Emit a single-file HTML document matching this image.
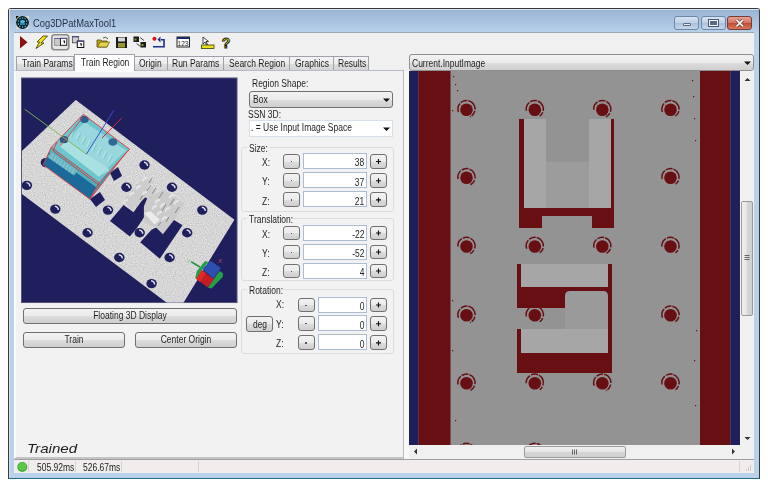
<!DOCTYPE html><html><head><meta charset="utf-8"><style>
html,body{margin:0;padding:0;width:768px;height:485px;overflow:hidden;background:#fff;}
.t{position:absolute;white-space:nowrap;font-family:"Liberation Sans",sans-serif;transform-origin:0 0;}
.r{position:absolute;box-sizing:border-box;}
svg{position:absolute;left:0;top:0;}
</style></head><body>
<div class="r" style="left:8px;top:8px;width:752px;height:471px;background:linear-gradient(#98b4d3 0px,#a9c3df 12px,#b9d1ea 24px,#b9d1ea 100%);border:1px solid #3a3a3a;border-radius:3px 3px 0 0;border-bottom-color:#1f6f80;"></div>
<div class="r" style="left:9px;top:9px;width:750px;height:1px;background:#d6e4f3;border-radius:2px 2px 0 0;"></div>
<div class="r" style="left:9px;top:9px;width:1px;height:469px;background:#d0e0f0;"></div>
<div class="r" style="left:14px;top:32px;width:740px;height:441px;background:#f0f0f0;border-top:1px solid #9aa6b4;"></div>
<svg width="768" height="485" style="left:0;top:0"><rect x="16" y="16" width="13" height="13" fill="#d6d8d4"/><path d="M16 16h3l-3 3z" fill="#111"/><circle cx="22.5" cy="22.5" r="6.4" fill="#0c1a22"/><ellipse cx="22.5" cy="21.5" rx="2.6" ry="1.6" fill="#3ec4e6"/><rect x="20" y="23.2" width="5" height="1.6" fill="#2aa8cc"/><path d="M19.5 18.5h1.2M22 18h1.2M24.5 18.5h1.2M17.8 21h1.2M26 21h1.2M17.8 24h1.2M26 24h1.2M19 26.5h1.4M22 27h1.2M24.5 26.5h1.4" stroke="#38b8dc" stroke-width="1.3"/></svg>
<div class="t" style="left:32.50px;top:17.69px;font-size:11px;line-height:11px;transform:scaleX(0.85);color:#25324a;">Cog3DPatMaxTool1</div>
<div class="r" style="left:674px;top:16px;width:25px;height:14px;border:1px solid #6f87a6;border-radius:3px;background:linear-gradient(#d7e3f1,#bcd0e8 50%,#a9c0dc 51%,#c4d7ec);"></div>
<div class="r" style="left:682.5px;top:22.5px;width:8.5px;height:3.5px;background:#e8ecf0;border:1px solid #5a6880;border-radius:1px;"></div>
<div class="r" style="left:701px;top:16px;width:25px;height:14px;border:1px solid #6f87a6;border-radius:3px;background:linear-gradient(#d7e3f1,#bcd0e8 50%,#a9c0dc 51%,#c4d7ec);"></div>
<div class="r" style="left:709px;top:20px;width:9px;height:6px;border:1.5px solid #f2f5f8;outline:1px solid #4a5870;background:#5a6880;"></div>
<div class="r" style="left:727px;top:16px;width:25px;height:14px;border:1px solid #7a3a36;border-radius:3px;background:linear-gradient(#e8a196,#d5705f 50%,#c24a33 51%,#d77a5e);"></div>
<svg width="768" height="485"><path d="M736.5 19.8l6.5 6.5M743 19.8l-6.5 6.5" stroke="#6a3a34" stroke-width="3.2"/><path d="M736.5 19.8l6.5 6.5M743 19.8l-6.5 6.5" stroke="#f4eeee" stroke-width="1.9"/></svg>
<svg width="768" height="485"><path d="M20 36 L27.5 42.2 L20 48.5 Z" fill="#8a1010"/><path d="M43 36 L47.5 36 L41 43 L44 43 L36 48.5 L39.5 42 L37 42 Z" fill="#f1e21a" stroke="#3a3300" stroke-width="0.8"/><rect x="51.8" y="34.8" width="17" height="15" rx="2.8" fill="#e6e6e6" stroke="#8a8a8a" stroke-width="1.6"/><rect x="54.5" y="38.3" width="6" height="7" fill="#c8c8c8" stroke="#777" stroke-width="0.6"/><rect x="54.5" y="38" width="6" height="1" fill="#5a5aa0"/><rect x="60.5" y="38.3" width="6.3" height="7" fill="#fff" stroke="#111" stroke-width="0.9"/><rect x="60.5" y="38" width="6.3" height="1" fill="#5a5aa0"/><path d="M63.2 40.5h1.8v3l-1 -0.8z" fill="#111"/><rect x="72.3" y="36.5" width="6.4" height="6.3" fill="#cfcfcf" stroke="#333" stroke-width="0.7"/><rect x="72.3" y="36.2" width="6.4" height="1.2" fill="#4a4a90"/><rect x="77.3" y="41" width="6.5" height="6.5" fill="#fff" stroke="#111" stroke-width="1"/><rect x="77.3" y="40.7" width="6.5" height="1.2" fill="#4a4a90"/><path d="M80 43.2h1.8v3l-1 -0.8z" fill="#111"/><path d="M97 40 h4 l1 1 h5 v6 h-10 z" fill="#b9a52c" stroke="#5a4d00" stroke-width="0.8"/><path d="M97.5 47 l2.5 -5 h9.5 l-2.5 5 z" fill="#e6d24a" stroke="#5a4d00" stroke-width="0.7"/><path d="M103 38 q3 -2 5 1" stroke="#3a6a20" stroke-width="1" fill="none"/><rect x="116" y="37" width="11" height="11" fill="#1b1b1b"/><rect x="118" y="37.5" width="7" height="4" fill="#d8d8d8"/><rect x="118" y="43" width="7" height="4.5" fill="#9a9a30"/><rect x="133.5" y="36.5" width="5.5" height="5.5" fill="#1a1a1a"/><rect x="134.5" y="38.5" width="2" height="2" fill="#8a9030"/><rect x="140.5" y="42" width="5.5" height="5.5" fill="#1a1a1a"/><rect x="141.5" y="44" width="2" height="2" fill="#8a9030"/><path d="M140 37.5l4 3M140.5 46.5l-4 -3" stroke="#333" stroke-width="0.9"/><circle cx="154.5" cy="38.8" r="2" fill="#e01010"/><path d="M153 46.8 h11 v-7 h-3" stroke="#1a2f8a" stroke-width="1.6" fill="none"/><path d="M160.5 36.5 l-3 3 l3 3 z" fill="#1a2f8a"/><rect x="177" y="37" width="12.5" height="10" fill="#fff" stroke="#222" stroke-width="1"/><rect x="177" y="37" width="12.5" height="2" fill="#1a2a6a"/><text x="177.6" y="46" font-family="Liberation Sans" font-size="6.5" fill="#222">123</text><path d="M203 37 v7 l2 -2 l1.5 3 l1 -0.5 l-1.5 -3 h2.5 z" fill="#fff" stroke="#111" stroke-width="0.8"/><rect x="201.5" y="45" width="12.5" height="3.5" fill="#e8e020" stroke="#3a3a00" stroke-width="0.8"/><text x="221.8" y="47.8" font-family="Liberation Sans" font-weight="bold" font-size="14" fill="#e0d020" stroke="#1a1a1a" stroke-width="0.9">?</text></svg>
<div class="r" style="left:16px;top:56px;width:58px;height:14px;background:linear-gradient(#f4f4f4,#ececec 50%,#dedede 51%,#d4d4d4);border:1px solid #9ea3ab;border-bottom:none;"></div>
<div class="t" style="left:21.50px;top:59.33px;font-size:10px;line-height:10px;transform:scaleX(0.85);color:#1e1e1e;">Train Params</div>
<div class="r" style="left:134px;top:56px;width:34px;height:14px;background:linear-gradient(#f4f4f4,#ececec 50%,#dedede 51%,#d4d4d4);border:1px solid #9ea3ab;border-bottom:none;"></div>
<div class="t" style="left:138.50px;top:59.33px;font-size:10px;line-height:10px;transform:scaleX(0.85);color:#1e1e1e;">Origin</div>
<div class="r" style="left:167px;top:56px;width:57px;height:14px;background:linear-gradient(#f4f4f4,#ececec 50%,#dedede 51%,#d4d4d4);border:1px solid #9ea3ab;border-bottom:none;"></div>
<div class="t" style="left:172.00px;top:59.33px;font-size:10px;line-height:10px;transform:scaleX(0.85);color:#1e1e1e;">Run Params</div>
<div class="r" style="left:223px;top:56px;width:67px;height:14px;background:linear-gradient(#f4f4f4,#ececec 50%,#dedede 51%,#d4d4d4);border:1px solid #9ea3ab;border-bottom:none;"></div>
<div class="t" style="left:228.50px;top:59.33px;font-size:10px;line-height:10px;transform:scaleX(0.85);color:#1e1e1e;">Search Region</div>
<div class="r" style="left:289px;top:56px;width:45px;height:14px;background:linear-gradient(#f4f4f4,#ececec 50%,#dedede 51%,#d4d4d4);border:1px solid #9ea3ab;border-bottom:none;"></div>
<div class="t" style="left:294.50px;top:59.33px;font-size:10px;line-height:10px;transform:scaleX(0.85);color:#1e1e1e;">Graphics</div>
<div class="r" style="left:333px;top:56px;width:36px;height:14px;background:linear-gradient(#f4f4f4,#ececec 50%,#dedede 51%,#d4d4d4);border:1px solid #9ea3ab;border-bottom:none;"></div>
<div class="t" style="left:338.00px;top:59.33px;font-size:10px;line-height:10px;transform:scaleX(0.85);color:#1e1e1e;">Results</div>
<div class="r" style="left:14px;top:70px;width:390px;height:389px;background:#f2f2f2;border:1px solid #b6bcc4;border-left:2px solid #fbfbfb;border-bottom:2px solid #c4c4c4;"></div>
<div class="r" style="left:404px;top:71px;width:5px;height:388px;background:#f8f8f8;"></div>
<div class="r" style="left:74px;top:54px;width:61px;height:17px;background:#fff;border:1px solid #9ea3ab;border-bottom:none;"></div>
<div class="t" style="left:80.50px;top:57.73px;font-size:10px;line-height:10px;transform:scaleX(0.85);color:#1e1e1e;">Train Region</div>
<div class="r" style="left:75px;top:69px;width:59px;height:3px;background:#fff;"></div>
<svg width="768" height="485"><defs><clipPath id="c3"><rect x="22" y="78.5" width="214.5" height="224"/></clipPath><filter id="nz" x="0" y="0" width="100%" height="100%"><feTurbulence type="fractalNoise" baseFrequency="0.9" numOctaves="1" seed="4"/><feColorMatrix type="matrix" values="1.3 0 0 0 0.14  1.3 0 0 0 0.14  1.3 0 0 0 0.14  0 0 0 0 1"/></filter></defs><rect x="21" y="77" width="217" height="226.5" fill="#e8e8e8"/><rect x="21.5" y="78" width="215.5" height="224.5" fill="#201f5e" stroke="#55557a" stroke-width="1"/><g clip-path="url(#c3)"><polygon points="75.8,99.9 234.3,219.7 183.2,303 167.2,303 20,192.6 20,152.8" fill="#cccccc"/><clipPath id="cpl"><polygon points="75.8,99.9 234.3,219.7 183.2,303 167.2,303 20,192.6 20,152.8"/></clipPath><g clip-path="url(#cpl)"><rect x="20" y="95" width="220" height="210" filter="url(#nz)" opacity="0.4"/></g><polygon points="123.6,204.9 110,220.9 129.8,236.4 136.6,228.4 147.7,211.7 145.8,210.4 147.7,198.7 144.6,196.8 133.5,212.3" fill="#201f5e"/><polygon points="140.2,242.2 159.8,258.7 182.5,225.3 173.2,219.5 151.5,229.8" fill="#201f5e"/><polygon points="123.3,200.5 143,177.4 153.8,181.5 154.6,192.2 145.5,197.2 131.5,210.4" fill="#cdcdcd"/><polygon points="143.9,206.3 148,196.4 164.5,189.8 184.3,203.8 174.4,219.5 162.9,234.3 156.3,227.7 143.9,221.9" fill="#cbcbcb"/><polygon points="143.9,212.9 150.5,211.2 159.6,219.5 154.6,224.4" fill="#ececec"/><path d="M142.5 181.5 q0.5 -3.5 4.5 -3.5" stroke="#eeeeee" stroke-width="1.8" fill="none" opacity="0.75"/><path d="M136.5 189.5 q0.5 -3.5 4.5 -3.5" stroke="#eeeeee" stroke-width="1.8" fill="none" opacity="0.75"/><path d="M129.5 196.5 q0.5 -3.5 4.5 -3.5" stroke="#eeeeee" stroke-width="1.8" fill="none" opacity="0.75"/><path d="M123.5 203.5 q0.5 -3.5 4.5 -3.5" stroke="#eeeeee" stroke-width="1.8" fill="none" opacity="0.75"/><path d="M148.5 188.5 q0.5 -3.5 4.5 -3.5" stroke="#eeeeee" stroke-width="1.8" fill="none" opacity="0.75"/><path d="M142.5 195.5 q0.5 -3.5 4.5 -3.5" stroke="#eeeeee" stroke-width="1.8" fill="none" opacity="0.75"/><path d="M155.5 203.5 q0.5 -3.5 4.5 -3.5" stroke="#eeeeee" stroke-width="1.8" fill="none" opacity="0.75"/><path d="M160.5 207.5 q0.5 -3.5 4.5 -3.5" stroke="#eeeeee" stroke-width="1.8" fill="none" opacity="0.75"/><path d="M165.5 211.5 q0.5 -3.5 4.5 -3.5" stroke="#eeeeee" stroke-width="1.8" fill="none" opacity="0.75"/><path d="M169.5 198.5 q0.5 -3.5 4.5 -3.5" stroke="#eeeeee" stroke-width="1.8" fill="none" opacity="0.75"/><path d="M174.5 204.5 q0.5 -3.5 4.5 -3.5" stroke="#eeeeee" stroke-width="1.8" fill="none" opacity="0.75"/><path d="M157.5 215.5 q0.5 -3.5 4.5 -3.5" stroke="#eeeeee" stroke-width="1.8" fill="none" opacity="0.75"/><path d="M162.5 220.5 q0.5 -3.5 4.5 -3.5" stroke="#eeeeee" stroke-width="1.8" fill="none" opacity="0.75"/><path d="M152.5 209.5 q0.5 -3.5 4.5 -3.5" stroke="#eeeeee" stroke-width="1.8" fill="none" opacity="0.75"/><path d="M149 183 l3 -5" stroke="#808080" stroke-width="0.9"/><path d="M147 191 l4 -6" stroke="#808080" stroke-width="0.9"/><path d="M140 200 l3 -5" stroke="#808080" stroke-width="0.9"/><path d="M152 194 l4 -6" stroke="#808080" stroke-width="0.9"/><path d="M159 198 l4 -6" stroke="#808080" stroke-width="0.9"/><path d="M162 211 l4 -7" stroke="#808080" stroke-width="0.9"/><path d="M170 205 l4 -6" stroke="#808080" stroke-width="0.9"/><path d="M175 213 l4 -6" stroke="#808080" stroke-width="0.9"/><path d="M166 222 l3 -5" stroke="#808080" stroke-width="0.9"/><path d="M158 226 l3 -4" stroke="#808080" stroke-width="0.9"/><ellipse cx="26.9" cy="185.4" rx="5.2" ry="4.7" fill="#201f5e"/><path d="M26.4 182.6 q3.5 0.5 3.5 3.8" stroke="#e4e4ee" stroke-width="1.4" fill="none"/><ellipse cx="55.300000000000004" cy="209.10000000000002" rx="5.2" ry="4.7" fill="#201f5e"/><path d="M54.800000000000004 206.3 q3.5 0.5 3.5 3.8" stroke="#e4e4ee" stroke-width="1.4" fill="none"/><ellipse cx="87.60000000000001" cy="232.8" rx="5.2" ry="4.7" fill="#201f5e"/><path d="M87.10000000000001 230.0 q3.5 0.5 3.5 3.8" stroke="#e4e4ee" stroke-width="1.4" fill="none"/><ellipse cx="119.3" cy="257.5" rx="5.2" ry="4.7" fill="#201f5e"/><path d="M118.8 254.7 q3.5 0.5 3.5 3.8" stroke="#e4e4ee" stroke-width="1.4" fill="none"/><ellipse cx="151.6" cy="283.6" rx="5.2" ry="4.7" fill="#201f5e"/><path d="M151.1 280.8 q3.5 0.5 3.5 3.8" stroke="#e4e4ee" stroke-width="1.4" fill="none"/><ellipse cx="144.5" cy="165.0" rx="5.2" ry="4.7" fill="#201f5e"/><path d="M144.0 162.2 q3.5 0.5 3.5 3.8" stroke="#e4e4ee" stroke-width="1.4" fill="none"/><ellipse cx="126.5" cy="187.3" rx="5.2" ry="4.7" fill="#201f5e"/><path d="M126.0 184.5 q3.5 0.5 3.5 3.8" stroke="#e4e4ee" stroke-width="1.4" fill="none"/><ellipse cx="108.0" cy="210.10000000000002" rx="5.2" ry="4.7" fill="#201f5e"/><path d="M107.5 207.3 q3.5 0.5 3.5 3.8" stroke="#e4e4ee" stroke-width="1.4" fill="none"/><ellipse cx="172.0" cy="187.3" rx="5.2" ry="4.7" fill="#201f5e"/><path d="M171.5 184.5 q3.5 0.5 3.5 3.8" stroke="#e4e4ee" stroke-width="1.4" fill="none"/><ellipse cx="202.29999999999998" cy="210.10000000000002" rx="5.2" ry="4.7" fill="#201f5e"/><path d="M201.79999999999998 207.3 q3.5 0.5 3.5 3.8" stroke="#e4e4ee" stroke-width="1.4" fill="none"/><ellipse cx="187.2" cy="232.8" rx="5.2" ry="4.7" fill="#201f5e"/><path d="M186.7 230.0 q3.5 0.5 3.5 3.8" stroke="#e4e4ee" stroke-width="1.4" fill="none"/><ellipse cx="169.6" cy="257.5" rx="5.2" ry="4.7" fill="#201f5e"/><path d="M169.1 254.7 q3.5 0.5 3.5 3.8" stroke="#e4e4ee" stroke-width="1.4" fill="none"/><ellipse cx="139.7" cy="232.8" rx="5.2" ry="4.7" fill="#201f5e"/><path d="M139.2 230.0 q3.5 0.5 3.5 3.8" stroke="#e4e4ee" stroke-width="1.4" fill="none"/><ellipse cx="45.900000000000006" cy="162.60000000000002" rx="5.2" ry="4.7" fill="#201f5e"/><path d="M45.400000000000006 159.8 q3.5 0.5 3.5 3.8" stroke="#e4e4ee" stroke-width="1.4" fill="none"/><polygon points="90,199 100,192 105,200 96,207" fill="#201f5e"/><polygon points="110,173 118,167 122,176 114,181" fill="#201f5e"/><polygon points="51.3,147.2 99,182.8 90,199.2 43.1,164.8" fill="#1b6a9a"/><polygon points="99,182.8 129.6,149.3 125.5,153.4 90,199.2" fill="#3f9cb4"/><polygon points="51.3,147.2 99,182.8 96.5,187.5 48.8,152.2" fill="#4fb0c0"/><polygon points="51.7,151.9 77.7,170.4 74,175.4 46.8,156.8" fill="#6ab6c4"/><path d="M53 154.0 l-2.3 5" stroke="#9ad4dc" stroke-width="0.7"/><path d="M56 156.15 l-2.3 5" stroke="#9ad4dc" stroke-width="0.7"/><path d="M59 158.3 l-2.3 5" stroke="#9ad4dc" stroke-width="0.7"/><path d="M62 160.45 l-2.3 5" stroke="#9ad4dc" stroke-width="0.7"/><path d="M65 162.6 l-2.3 5" stroke="#9ad4dc" stroke-width="0.7"/><path d="M68 164.75 l-2.3 5" stroke="#9ad4dc" stroke-width="0.7"/><path d="M71 166.9 l-2.3 5" stroke="#9ad4dc" stroke-width="0.7"/><path d="M74 169.05 l-2.3 5" stroke="#9ad4dc" stroke-width="0.7"/><polygon points="83.3,114.3 129.6,149.3 99,182.8 51.3,147.2" fill="#6cc6ce"/><polygon points="85.1,122.2 126,150.6 98.7,176.6 59.1,145.7" fill="#98d8dc"/><polygon points="66,140 110,170 98.7,176.6 59.1,145.7" fill="#aee2e4" opacity="0.8"/><path d="M74.0 129.0 l-3.5 7" stroke="#c6eeee" stroke-width="0.7"/><path d="M75.5 130.0 l-3.5 7" stroke="#5fb0ba" stroke-width="0.5"/><path d="M79.3 132.7 l-3.5 7" stroke="#c6eeee" stroke-width="0.7"/><path d="M80.8 133.7 l-3.5 7" stroke="#5fb0ba" stroke-width="0.5"/><path d="M84.6 136.4 l-3.5 7" stroke="#c6eeee" stroke-width="0.7"/><path d="M86.1 137.4 l-3.5 7" stroke="#5fb0ba" stroke-width="0.5"/><path d="M89.9 140.1 l-3.5 7" stroke="#c6eeee" stroke-width="0.7"/><path d="M91.4 141.1 l-3.5 7" stroke="#5fb0ba" stroke-width="0.5"/><path d="M95.2 143.8 l-3.5 7" stroke="#c6eeee" stroke-width="0.7"/><path d="M96.7 144.8 l-3.5 7" stroke="#5fb0ba" stroke-width="0.5"/><path d="M100.5 147.5 l-3.5 7" stroke="#c6eeee" stroke-width="0.7"/><path d="M102.0 148.5 l-3.5 7" stroke="#5fb0ba" stroke-width="0.5"/><path d="M105.8 151.2 l-3.5 7" stroke="#c6eeee" stroke-width="0.7"/><path d="M107.3 152.2 l-3.5 7" stroke="#5fb0ba" stroke-width="0.5"/><path d="M111.1 154.9 l-3.5 7" stroke="#c6eeee" stroke-width="0.7"/><path d="M112.6 155.9 l-3.5 7" stroke="#5fb0ba" stroke-width="0.5"/><ellipse cx="84.4" cy="119.3" rx="4.3" ry="3.6" fill="#2c5f8f"/><ellipse cx="112.8" cy="142" rx="4.5" ry="3.8" fill="#2f6a96"/><ellipse cx="64" cy="139.7" rx="4.2" ry="3.6" fill="#2a5a8a"/><path d="M83.3 114.3 L129.6 149.3 L99 182.8 L51.3 147.2 Z M51.3 147.2 L43.1 164.8 L90 199.2 L99 182.8 M90 199.2 L125.5 153.4 L129.6 149.3 M82 118 Q70 135 60 146 M57 142 L53 151 L100 186" stroke="#e23b3b" stroke-width="0.9" fill="none"/><path d="M24.7 109.2 L86.4 154.2" stroke="#7ab84a" stroke-width="0.9"/><path d="M86.4 154.2 L113.9 110.1" stroke="#3a4ed0" stroke-width="1"/><path d="M102 138 L122 117.7" stroke="#d02a3a" stroke-width="1"/><polygon points="195.3,277.8 196.7,271.3 205,261.1 208.3,262.1 201.8,269.9 196.2,279.7" fill="#23a046"/><polygon points="207.8,287.6 219.5,271 223.1,273.2 222.7,276.9 211.5,288.5" fill="#23a046"/><polygon points="202.3,269 210.6,260.7 220.8,268.1 213.4,278.8" fill="#2e4fb0"/><polygon points="196.2,278.8 201.8,270 213.9,279.2 207.8,287.6" fill="#c41c22"/><polygon points="196.2,278.8 201.8,270 206,273 200,282" fill="#e02828"/><path d="M191.1 261.6 L200 267.2" stroke="#1e8a3a" stroke-width="1.5"/><text x="186.5" y="262.5" font-family="Liberation Sans" font-size="6" fill="#7ad070">Y</text><text x="218" y="262.5" font-family="Liberation Sans" font-size="6" fill="#c0405a">X</text></g></svg>
<div class="t" style="left:251.80px;top:78.94px;font-size:10px;line-height:10px;transform:scaleX(0.85);color:#1e1e1e;">Region Shape:</div>
<div class="r" style="left:249px;top:91px;width:144px;height:17px;border:1px solid #707070;border-radius:3px;background:linear-gradient(#f2f2f2,#ebebeb 50%,#dddddd 51%,#cfcfcf);"></div>
<div class="t" style="left:252.50px;top:95.33px;font-size:10px;line-height:10px;transform:scaleX(0.85);color:#1e1e1e;">Box</div>
<div class="t" style="left:248.40px;top:109.73px;font-size:10px;line-height:10px;transform:scaleX(0.85);color:#1e1e1e;">SSN 3D:</div>
<div class="r" style="left:249px;top:120px;width:144px;height:17px;border:1px solid #d7dfe8;background:#fff;"></div>
<div class="t" style="left:251.00px;top:123.33px;font-size:10px;line-height:10px;transform:scaleX(0.85);color:#1e1e1e;">. = Use Input Image Space</div>
<svg width="768" height="485"><path d="M383 98.5h7l-3.5 3.5z M383 127.5h7l-3.5 3.5z" fill="#111"/></svg>
<div class="r" style="left:241px;top:147px;width:153px;height:65px;border:1px solid #dcdcdc;border-radius:3px;"></div>
<div class="r" style="left:247px;top:142px;width:22px;height:11px;background:#f2f2f2;"></div>
<div class="t" style="left:249.00px;top:143.73px;font-size:10px;line-height:10px;transform:scaleX(0.85);color:#1e1e1e;">Size:</div>
<div class="t" style="left:261.60px;top:158.13px;font-size:10px;line-height:10px;transform:scaleX(0.85);color:#222;">X:</div>
<div class="r" style="left:283px;top:154.0px;width:17px;height:14.800000000000011px;border:1px solid #707070;border-radius:3px;background:linear-gradient(#f2f2f2,#ebebeb 50%,#dddddd 51%,#cfcfcf);"></div>
<div class="r" style="left:290.5px;top:161.0px;width:1.5px;height:1.2px;background:#555"></div>
<div class="r" style="left:303px;top:153.0px;width:64px;height:16.0px;border:1px solid #abbdd2;background:#fff;"></div>
<div class="t" style="right:403.50px;top:158.33px;font-size:10px;line-height:10px;transform:scaleX(0.85);transform-origin:100% 0;color:#1e1e1e;">38</div>
<div class="r" style="left:370px;top:154.0px;width:17px;height:14.800000000000011px;border:1px solid #707070;border-radius:3px;background:linear-gradient(#f2f2f2,#ebebeb 50%,#dddddd 51%,#cfcfcf);"></div>
<svg width="768" height="485"><path d="M376 161.5h5M378.5 159.0v5" stroke="#111" stroke-width="1.1"/></svg>
<div class="t" style="left:261.60px;top:177.33px;font-size:10px;line-height:10px;transform:scaleX(0.85);color:#222;">Y:</div>
<div class="r" style="left:283px;top:173.2px;width:17px;height:14.800000000000011px;border:1px solid #707070;border-radius:3px;background:linear-gradient(#f2f2f2,#ebebeb 50%,#dddddd 51%,#cfcfcf);"></div>
<div class="r" style="left:290.5px;top:180.2px;width:1.5px;height:1.2px;background:#555"></div>
<div class="r" style="left:303px;top:172.2px;width:64px;height:16.0px;border:1px solid #abbdd2;background:#fff;"></div>
<div class="t" style="right:403.50px;top:177.53px;font-size:10px;line-height:10px;transform:scaleX(0.85);transform-origin:100% 0;color:#1e1e1e;">37</div>
<div class="r" style="left:370px;top:173.2px;width:17px;height:14.800000000000011px;border:1px solid #707070;border-radius:3px;background:linear-gradient(#f2f2f2,#ebebeb 50%,#dddddd 51%,#cfcfcf);"></div>
<svg width="768" height="485"><path d="M376 180.7h5M378.5 178.2v5" stroke="#111" stroke-width="1.1"/></svg>
<div class="t" style="left:261.60px;top:196.53px;font-size:10px;line-height:10px;transform:scaleX(0.85);color:#222;">Z:</div>
<div class="r" style="left:283px;top:192.4px;width:17px;height:14.800000000000011px;border:1px solid #707070;border-radius:3px;background:linear-gradient(#f2f2f2,#ebebeb 50%,#dddddd 51%,#cfcfcf);"></div>
<div class="r" style="left:290.5px;top:199.4px;width:1.5px;height:1.2px;background:#555"></div>
<div class="r" style="left:303px;top:191.4px;width:64px;height:16.0px;border:1px solid #abbdd2;background:#fff;"></div>
<div class="t" style="right:403.50px;top:196.73px;font-size:10px;line-height:10px;transform:scaleX(0.85);transform-origin:100% 0;color:#1e1e1e;">21</div>
<div class="r" style="left:370px;top:192.4px;width:17px;height:14.800000000000011px;border:1px solid #707070;border-radius:3px;background:linear-gradient(#f2f2f2,#ebebeb 50%,#dddddd 51%,#cfcfcf);"></div>
<svg width="768" height="485"><path d="M376 199.9h5M378.5 197.4v5" stroke="#111" stroke-width="1.1"/></svg>
<div class="r" style="left:241px;top:218px;width:153px;height:63px;border:1px solid #dcdcdc;border-radius:3px;"></div>
<div class="r" style="left:247px;top:213px;width:44px;height:11px;background:#f2f2f2;"></div>
<div class="t" style="left:249.00px;top:214.73px;font-size:10px;line-height:10px;transform:scaleX(0.85);color:#1e1e1e;">Translation:</div>
<div class="t" style="left:261.60px;top:229.63px;font-size:10px;line-height:10px;transform:scaleX(0.85);color:#222;">X:</div>
<div class="r" style="left:283px;top:225.5px;width:17px;height:14.800000000000011px;border:1px solid #707070;border-radius:3px;background:linear-gradient(#f2f2f2,#ebebeb 50%,#dddddd 51%,#cfcfcf);"></div>
<div class="r" style="left:290.5px;top:232.5px;width:1.5px;height:1.2px;background:#555"></div>
<div class="r" style="left:303px;top:224.5px;width:64px;height:16.0px;border:1px solid #abbdd2;background:#fff;"></div>
<div class="t" style="right:403.50px;top:229.83px;font-size:10px;line-height:10px;transform:scaleX(0.85);transform-origin:100% 0;color:#1e1e1e;">-22</div>
<div class="r" style="left:370px;top:225.5px;width:17px;height:14.800000000000011px;border:1px solid #707070;border-radius:3px;background:linear-gradient(#f2f2f2,#ebebeb 50%,#dddddd 51%,#cfcfcf);"></div>
<svg width="768" height="485"><path d="M376 233.0h5M378.5 230.5v5" stroke="#111" stroke-width="1.1"/></svg>
<div class="t" style="left:261.60px;top:248.63px;font-size:10px;line-height:10px;transform:scaleX(0.85);color:#222;">Y:</div>
<div class="r" style="left:283px;top:244.5px;width:17px;height:14.800000000000011px;border:1px solid #707070;border-radius:3px;background:linear-gradient(#f2f2f2,#ebebeb 50%,#dddddd 51%,#cfcfcf);"></div>
<div class="r" style="left:290.5px;top:251.5px;width:1.5px;height:1.2px;background:#555"></div>
<div class="r" style="left:303px;top:243.5px;width:64px;height:16.0px;border:1px solid #abbdd2;background:#fff;"></div>
<div class="t" style="right:403.50px;top:248.84px;font-size:10px;line-height:10px;transform:scaleX(0.85);transform-origin:100% 0;color:#1e1e1e;">-52</div>
<div class="r" style="left:370px;top:244.5px;width:17px;height:14.800000000000011px;border:1px solid #707070;border-radius:3px;background:linear-gradient(#f2f2f2,#ebebeb 50%,#dddddd 51%,#cfcfcf);"></div>
<svg width="768" height="485"><path d="M376 252.0h5M378.5 249.5v5" stroke="#111" stroke-width="1.1"/></svg>
<div class="t" style="left:261.60px;top:267.63px;font-size:10px;line-height:10px;transform:scaleX(0.85);color:#222;">Z:</div>
<div class="r" style="left:283px;top:263.5px;width:17px;height:14.800000000000011px;border:1px solid #707070;border-radius:3px;background:linear-gradient(#f2f2f2,#ebebeb 50%,#dddddd 51%,#cfcfcf);"></div>
<div class="r" style="left:290.5px;top:270.5px;width:1.5px;height:1.2px;background:#555"></div>
<div class="r" style="left:303px;top:262.5px;width:64px;height:16.0px;border:1px solid #abbdd2;background:#fff;"></div>
<div class="t" style="right:403.50px;top:267.84px;font-size:10px;line-height:10px;transform:scaleX(0.85);transform-origin:100% 0;color:#1e1e1e;">4</div>
<div class="r" style="left:370px;top:263.5px;width:17px;height:14.800000000000011px;border:1px solid #707070;border-radius:3px;background:linear-gradient(#f2f2f2,#ebebeb 50%,#dddddd 51%,#cfcfcf);"></div>
<svg width="768" height="485"><path d="M376 271.0h5M378.5 268.5v5" stroke="#111" stroke-width="1.1"/></svg>
<div class="r" style="left:241px;top:289px;width:153px;height:65px;border:1px solid #dcdcdc;border-radius:3px;"></div>
<div class="r" style="left:247px;top:284px;width:36px;height:11px;background:#f2f2f2;"></div>
<div class="t" style="left:249.00px;top:285.74px;font-size:10px;line-height:10px;transform:scaleX(0.85);color:#1e1e1e;">Rotation:</div>
<div class="t" style="left:275.60px;top:300.24px;font-size:10px;line-height:10px;transform:scaleX(0.85);color:#222;">X:</div>
<div class="r" style="left:297.8px;top:297.5px;width:17.0px;height:14.800000000000011px;border:1px solid #707070;border-radius:3px;background:linear-gradient(#f2f2f2,#ebebeb 50%,#dddddd 51%,#cfcfcf);"></div>
<div class="r" style="left:305.3px;top:304.5px;width:1.5px;height:1.2px;background:#555"></div>
<div class="r" style="left:317.8px;top:296.5px;width:49.19999999999999px;height:16.0px;border:1px solid #abbdd2;background:#fff;"></div>
<div class="t" style="right:403.50px;top:301.84px;font-size:10px;line-height:10px;transform:scaleX(0.85);transform-origin:100% 0;color:#1e1e1e;">0</div>
<div class="r" style="left:370px;top:297.5px;width:17px;height:14.800000000000011px;border:1px solid #707070;border-radius:3px;background:linear-gradient(#f2f2f2,#ebebeb 50%,#dddddd 51%,#cfcfcf);"></div>
<svg width="768" height="485"><path d="M376 305.0h5M378.5 302.5v5" stroke="#111" stroke-width="1.1"/></svg>
<div class="t" style="left:275.60px;top:319.64px;font-size:10px;line-height:10px;transform:scaleX(0.85);color:#222;">Y:</div>
<div class="r" style="left:297.8px;top:316.3px;width:17.0px;height:14.800000000000011px;border:1px solid #707070;border-radius:3px;background:linear-gradient(#f2f2f2,#ebebeb 50%,#dddddd 51%,#cfcfcf);"></div>
<div class="r" style="left:305.3px;top:323.3px;width:1.5px;height:1.2px;background:#555"></div>
<div class="r" style="left:317.8px;top:315.3px;width:49.19999999999999px;height:16.0px;border:1px solid #abbdd2;background:#fff;"></div>
<div class="t" style="right:403.50px;top:320.64px;font-size:10px;line-height:10px;transform:scaleX(0.85);transform-origin:100% 0;color:#1e1e1e;">0</div>
<div class="r" style="left:370px;top:316.3px;width:17px;height:14.800000000000011px;border:1px solid #707070;border-radius:3px;background:linear-gradient(#f2f2f2,#ebebeb 50%,#dddddd 51%,#cfcfcf);"></div>
<svg width="768" height="485"><path d="M376 323.8h5M378.5 321.3v5" stroke="#111" stroke-width="1.1"/></svg>
<div class="t" style="left:275.60px;top:338.53px;font-size:10px;line-height:10px;transform:scaleX(0.85);color:#222;">Z:</div>
<div class="r" style="left:297.8px;top:335.4px;width:17.0px;height:14.800000000000011px;border:1px solid #707070;border-radius:3px;background:linear-gradient(#f2f2f2,#ebebeb 50%,#dddddd 51%,#cfcfcf);"></div>
<div class="r" style="left:305.3px;top:342.4px;width:1.5px;height:1.2px;background:#555"></div>
<div class="r" style="left:317.8px;top:334.4px;width:49.19999999999999px;height:16.0px;border:1px solid #abbdd2;background:#fff;"></div>
<div class="t" style="right:403.50px;top:339.74px;font-size:10px;line-height:10px;transform:scaleX(0.85);transform-origin:100% 0;color:#1e1e1e;">0</div>
<div class="r" style="left:370px;top:335.4px;width:17px;height:14.800000000000011px;border:1px solid #707070;border-radius:3px;background:linear-gradient(#f2f2f2,#ebebeb 50%,#dddddd 51%,#cfcfcf);"></div>
<svg width="768" height="485"><path d="M376 342.9h5M378.5 340.4v5" stroke="#111" stroke-width="1.1"/></svg>
<div class="r" style="left:246px;top:315.5px;width:27px;height:16.5px;border:1px solid #707070;border-radius:3px;background:linear-gradient(#f2f2f2,#ebebeb 50%,#dddddd 51%,#cfcfcf);"></div>
<div class="t" style="left:59.50px;width:400px;text-align:center;top:319.54px;font-size:10px;line-height:10px;transform:scaleX(0.85);transform-origin:50% 0;color:#1e1e1e;">deg</div>
<div class="r" style="left:22.5px;top:308px;width:214.0px;height:15.5px;border:1px solid #707070;border-radius:3px;background:linear-gradient(#f2f2f2,#ebebeb 50%,#dddddd 51%,#cfcfcf);"></div>
<div class="t" style="left:-70.50px;width:400px;text-align:center;top:311.44px;font-size:10px;line-height:10px;transform:scaleX(0.85);transform-origin:50% 0;color:#1e1e1e;">Floating 3D Display</div>
<div class="r" style="left:22.5px;top:332px;width:102.0px;height:15.5px;border:1px solid #707070;border-radius:3px;background:linear-gradient(#f2f2f2,#ebebeb 50%,#dddddd 51%,#cfcfcf);"></div>
<div class="t" style="left:-126.50px;width:400px;text-align:center;top:335.44px;font-size:10px;line-height:10px;transform:scaleX(0.85);transform-origin:50% 0;color:#1e1e1e;">Train</div>
<div class="r" style="left:134.5px;top:332px;width:102.0px;height:15.5px;border:1px solid #707070;border-radius:3px;background:linear-gradient(#f2f2f2,#ebebeb 50%,#dddddd 51%,#cfcfcf);"></div>
<div class="t" style="left:-14.50px;width:400px;text-align:center;top:335.44px;font-size:10px;line-height:10px;transform:scaleX(0.85);transform-origin:50% 0;color:#1e1e1e;">Center Origin</div>
<div class="t" style="left:27.00px;top:442.47px;font-size:13.5px;line-height:13.5px;transform:scaleX(1.12);color:#1e1e1e;font-style:italic;">Trained</div>
<div class="r" style="left:14px;top:459px;width:740px;height:14px;background:#f1edec;border-top:1px solid #a0a0a0;"></div>
<svg width="768" height="485"><circle cx="22.3" cy="467" r="5" fill="#3aaa35"/><circle cx="22.3" cy="466.5" r="4" fill="#5cc64a"/><path d="M28.5 461v11M75.5 461v11M121.5 461v11M198.5 461v11M739.5 461v11" stroke="#d6d2d0" stroke-width="1"/><path d="M750 470h1M748 470h1M750 468h1M746 470h1M748 468h1M750 466h1" stroke="#aaa" stroke-width="1"/></svg>
<div class="t" style="left:37.00px;top:462.63px;font-size:10px;line-height:10px;transform:scaleX(0.85);color:#222;">505.92ms</div>
<div class="t" style="left:83.30px;top:462.63px;font-size:10px;line-height:10px;transform:scaleX(0.85);color:#222;">526.67ms</div>
<div class="r" style="left:409px;top:54px;width:345px;height:17px;border:1px solid #8e8f8f;border-radius:3px;background:linear-gradient(#f2f2f2,#ebebeb 50%,#dddddd 51%,#cfcfcf);"></div>
<div class="t" style="left:411.50px;top:59.03px;font-size:10px;line-height:10px;transform:scaleX(0.85);color:#1e1e1e;">Current.InputImage</div>
<svg width="768" height="485"><path d="M744 61.5h7l-3.5 3.5z" fill="#111"/></svg>
<svg width="768" height="485"><defs><clipPath id="cr"><rect x="409" y="71" width="331" height="374"/></clipPath></defs><g clip-path="url(#cr)"><rect x="409" y="71" width="331" height="374" fill="#939393"/><rect x="409" y="71" width="9.5" height="374" fill="#1f1f5e"/><rect x="418.5" y="71" width="32" height="374" fill="#670f13"/><rect x="700" y="71" width="30.5" height="374" fill="#670f13"/><rect x="730.5" y="71" width="9.5" height="374" fill="#1f1f5e"/><path d="M519 119h95v109h-22v-12h-50v12h-23z" fill="#670f13"/><rect x="524" y="119" width="22" height="89" fill="#a6a6a6"/><rect x="589" y="119" width="22" height="89" fill="#a6a6a6"/><rect x="546" y="118" width="43" height="44" fill="#939393"/><rect x="546" y="162" width="43" height="46" fill="#9c9c9c"/><rect x="542" y="216" width="50" height="13" fill="#939393"/><rect x="517" y="264" width="95" height="109" fill="#670f13"/><rect x="521" y="264" width="87" height="23" fill="#a6a6a6"/><rect x="517" y="308" width="48" height="21" fill="#939393"/><path d="M565 296 q0 -5 5 -5 h33 q5 0 5 5 v33 h-43z" fill="#9a9a9a"/><rect x="521" y="329" width="87" height="24" fill="#a6a6a6"/><circle cx="466.5" cy="109.7" r="6.3" fill="#670f13"/><path d="M458.42 112.04 A8.6 8.6 0 1 1 470.13 116.89" fill="none" stroke="#670f13" stroke-width="1.5" stroke-dasharray="9 1.2 7 1 12 1.5 6 1"/><circle cx="534.8" cy="109.7" r="6.3" fill="#670f13"/><path d="M526.39 110.89 A8.6 8.6 0 1 1 539.73 116.14" fill="none" stroke="#670f13" stroke-width="1.5" stroke-dasharray="9 1.2 7 1 12 1.5 6 1"/><circle cx="602.3" cy="109.7" r="6.3" fill="#670f13"/><path d="M593.72 109.70 A8.6 8.6 0 1 1 605.93 116.89" fill="none" stroke="#670f13" stroke-width="1.5" stroke-dasharray="9 1.2 7 1 12 1.5 6 1"/><circle cx="670.5" cy="109.7" r="6.3" fill="#670f13"/><path d="M662.42 112.04 A8.6 8.6 0 1 1 675.43 116.14" fill="none" stroke="#670f13" stroke-width="1.5" stroke-dasharray="9 1.2 7 1 12 1.5 6 1"/><circle cx="466.5" cy="177.8" r="6.3" fill="#670f13"/><path d="M458.09 178.99 A8.6 8.6 0 1 1 470.13 184.99" fill="none" stroke="#670f13" stroke-width="1.5" stroke-dasharray="9 1.2 7 1 12 1.5 6 1"/><circle cx="670.5" cy="177.8" r="6.3" fill="#670f13"/><path d="M662.09 178.99 A8.6 8.6 0 1 1 675.43 184.24" fill="none" stroke="#670f13" stroke-width="1.5" stroke-dasharray="9 1.2 7 1 12 1.5 6 1"/><circle cx="466.5" cy="246.5" r="6.3" fill="#670f13"/><path d="M457.92 246.50 A8.6 8.6 0 1 1 470.13 253.69" fill="none" stroke="#670f13" stroke-width="1.5" stroke-dasharray="9 1.2 7 1 12 1.5 6 1"/><circle cx="534.8" cy="246.5" r="6.3" fill="#670f13"/><path d="M526.72 248.84 A8.6 8.6 0 1 1 539.73 252.94" fill="none" stroke="#670f13" stroke-width="1.5" stroke-dasharray="9 1.2 7 1 12 1.5 6 1"/><circle cx="602.3" cy="246.5" r="6.3" fill="#670f13"/><path d="M593.89 247.69 A8.6 8.6 0 1 1 605.93 253.69" fill="none" stroke="#670f13" stroke-width="1.5" stroke-dasharray="9 1.2 7 1 12 1.5 6 1"/><circle cx="670.5" cy="246.5" r="6.3" fill="#670f13"/><path d="M661.92 246.50 A8.6 8.6 0 1 1 675.43 252.94" fill="none" stroke="#670f13" stroke-width="1.5" stroke-dasharray="9 1.2 7 1 12 1.5 6 1"/><circle cx="466.5" cy="315.3" r="6.3" fill="#670f13"/><path d="M458.42 317.64 A8.6 8.6 0 1 1 470.13 322.49" fill="none" stroke="#670f13" stroke-width="1.5" stroke-dasharray="9 1.2 7 1 12 1.5 6 1"/><circle cx="534.8" cy="315.3" r="6.3" fill="#670f13"/><path d="M526.39 316.49 A8.6 8.6 0 1 1 539.73 321.74" fill="none" stroke="#670f13" stroke-width="1.5" stroke-dasharray="9 1.2 7 1 12 1.5 6 1"/><circle cx="670.5" cy="315.3" r="6.3" fill="#670f13"/><path d="M662.42 317.64 A8.6 8.6 0 1 1 675.43 321.74" fill="none" stroke="#670f13" stroke-width="1.5" stroke-dasharray="9 1.2 7 1 12 1.5 6 1"/><circle cx="466.5" cy="383.3" r="6.3" fill="#670f13"/><path d="M458.09 384.49 A8.6 8.6 0 1 1 470.13 390.49" fill="none" stroke="#670f13" stroke-width="1.5" stroke-dasharray="9 1.2 7 1 12 1.5 6 1"/><circle cx="534.8" cy="383.3" r="6.3" fill="#670f13"/><path d="M526.22 383.30 A8.6 8.6 0 1 1 539.73 389.74" fill="none" stroke="#670f13" stroke-width="1.5" stroke-dasharray="9 1.2 7 1 12 1.5 6 1"/><circle cx="602.3" cy="383.3" r="6.3" fill="#670f13"/><path d="M594.22 385.64 A8.6 8.6 0 1 1 605.93 390.49" fill="none" stroke="#670f13" stroke-width="1.5" stroke-dasharray="9 1.2 7 1 12 1.5 6 1"/><circle cx="670.5" cy="383.3" r="6.3" fill="#670f13"/><path d="M662.09 384.49 A8.6 8.6 0 1 1 675.43 389.74" fill="none" stroke="#670f13" stroke-width="1.5" stroke-dasharray="9 1.2 7 1 12 1.5 6 1"/><circle cx="466.5" cy="452.5" r="6.3" fill="#670f13"/><path d="M457.92 452.50 A8.6 8.6 0 1 1 470.13 459.69" fill="none" stroke="#670f13" stroke-width="1.5" stroke-dasharray="9 1.2 7 1 12 1.5 6 1"/><circle cx="534.8" cy="452.5" r="6.3" fill="#670f13"/><path d="M526.72 454.84 A8.6 8.6 0 1 1 539.73 458.94" fill="none" stroke="#670f13" stroke-width="1.5" stroke-dasharray="9 1.2 7 1 12 1.5 6 1"/><rect x="453" y="76" width="1.2" height="1.2" fill="#670f13"/><rect x="455" y="84" width="1.2" height="1.2" fill="#670f13"/><rect x="457" y="90" width="1.2" height="1.2" fill="#670f13"/><rect x="452" y="110" width="1.2" height="1.2" fill="#670f13"/><rect x="692" y="80" width="1.2" height="1.2" fill="#670f13"/><rect x="693" y="96" width="1.2" height="1.2" fill="#670f13"/><rect x="694" y="118" width="1.2" height="1.2" fill="#670f13"/><rect x="695" y="140" width="1.2" height="1.2" fill="#670f13"/><rect x="696" y="330" width="1.2" height="1.2" fill="#670f13"/><rect x="694" y="360" width="1.2" height="1.2" fill="#670f13"/><rect x="452" y="300" width="1.2" height="1.2" fill="#670f13"/><rect x="452" y="350" width="1.2" height="1.2" fill="#670f13"/><rect x="695" y="405" width="1.2" height="1.2" fill="#670f13"/><rect x="455" y="420" width="1.2" height="1.2" fill="#670f13"/></g></svg>
<div class="r" style="left:740px;top:71px;width:14px;height:374px;background:#f0f0f0;border-left:1px solid #f8f8f8;"></div>
<div class="r" style="left:741px;top:201px;width:12px;height:115px;border:1px solid #9a9a9a;border-radius:2px;background:linear-gradient(90deg,#f0f0f0,#e4e4e4 50%,#d6d6d6 51%,#d0d0d0);"></div>
<svg width="768" height="485"><path d="M744.5 81h6l-3 -3z M744.5 437h6l-3 3z" fill="#333"/><path d="M744.5 255.5h5M744.5 257.5h5M744.5 259.5h5" stroke="#555" stroke-width="0.9"/></svg>
<div class="r" style="left:409px;top:445px;width:331px;height:14px;background:#f0f0f0;"></div>
<div class="r" style="left:524px;top:446px;width:102px;height:12px;border:1px solid #9a9a9a;border-radius:2px;background:linear-gradient(#f0f0f0,#e4e4e4 50%,#d6d6d6 51%,#d0d0d0);"></div>
<svg width="768" height="485"><path d="M417 448.5v6l-3 -3z M732 448.5v6l3 -3z" fill="#333"/><path d="M572.5 449.5v5M574.5 449.5v5M576.5 449.5v5" stroke="#555" stroke-width="0.9"/></svg>
<div class="r" style="left:740px;top:445px;width:14px;height:14px;background:#f0f0f0;"></div>
</body></html>
